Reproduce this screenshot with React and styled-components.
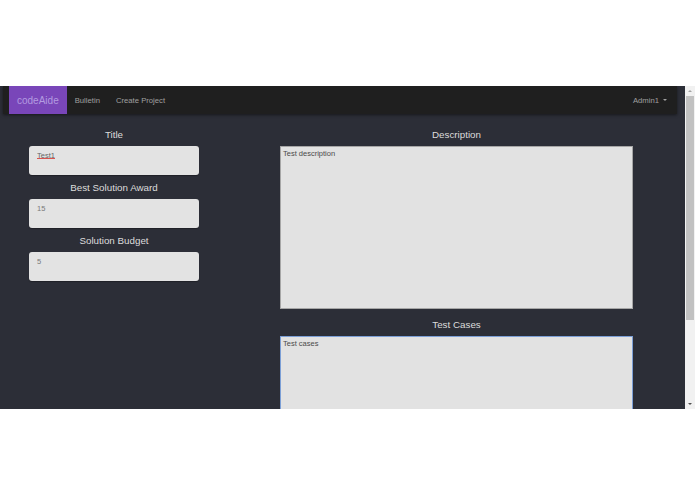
import React from "react";
import styled, { createGlobalStyle } from "styled-components";

const GlobalStyle = createGlobalStyle`
  html, body {
    margin: 0;
    padding: 0;
    background: #fff;
    font-family: "Liberation Sans", Arial, sans-serif;
  }
`;

const App = () => {
  return (
    <Page>
      <GlobalStyle />
      <Frame>
        <Main>
          <Navbar>
            <Brand>codeAide</Brand>
            <NavLink>Bulletin</NavLink>
            <NavLink>Create Project</NavLink>
            <UserMenu>
              Admin1
              <Caret />
            </UserMenu>
          </Navbar>
          <Form>
            <Column>
              <Label>Title</Label>
              <InputWrap>
                <Input defaultValue="Test1" spellCheck={false} />
                <SpellMark />
              </InputWrap>
              <Label>Best Solution Award</Label>
              <Input defaultValue="15" $muted />
              <Label>Solution Budget</Label>
              <Input defaultValue="5" $muted />
            </Column>
            <Column>
              <Label>Description</Label>
              <TextArea defaultValue="Test description" spellCheck={false} />
              <Label $top={9}>Test Cases</Label>
              <TextArea defaultValue="Test cases" spellCheck={false} $focused />
            </Column>
          </Form>
        </Main>
        <Scrollbar>
          <Arrow $up />
          <Track>
            <Thumb />
          </Track>
          <Arrow />
        </Scrollbar>
      </Frame>
    </Page>
  );
};

const Page = styled.div`
  height: 494px;
  padding-top: 86px;
  box-sizing: border-box;
  background: #fff;
`;

const Frame = styled.div`
  display: flex;
  height: 323px;
  overflow: hidden;
`;

const Main = styled.div`
  flex: 1;
  display: flex;
  flex-direction: column;
  background: #2c2e37;
  overflow: hidden;
`;

const Navbar = styled.nav`
  display: flex;
  align-items: stretch;
  height: 28px;
  flex-shrink: 0;
  margin: 0 8px 0 3px;
  padding-left: 6px;
  background: #1f1f1f;
  box-shadow: 0 1px 3px rgba(0, 0, 0, 0.5);
`;

const Brand = styled.div`
  display: flex;
  align-items: center;
  padding: 0 8px;
  background: #7946b9;
  color: #b39be0;
  font-size: 10px;
`;

const NavLink = styled.div`
  display: flex;
  align-items: center;
  padding: 0 8px;
  color: #a0a0a0;
  font-size: 7.7px;
`;

const UserMenu = styled(NavLink)`
  margin-left: auto;
  gap: 4px;
  padding-right: 10px;
`;

const Caret = styled.span`
  width: 0;
  height: 0;
  border-left: 2.5px solid transparent;
  border-right: 2.5px solid transparent;
  border-top: 2.5px solid #a0a0a0;
`;

const Form = styled.div`
  display: grid;
  grid-template-columns: 170px 353px;
  column-gap: 81px;
  padding: 8px 0 0 29px;
  align-items: start;
`;

const Column = styled.div`
  display: flex;
  flex-direction: column;
`;

const Label = styled.div`
  margin: ${(props) => props.$top ?? 6}px 0 4px;
  line-height: 14px;
  text-align: center;
  color: #dcdcdc;
  font-size: 9.8px;
`;

const InputWrap = styled.div`
  position: relative;
`;

const SpellMark = styled.span`
  position: absolute;
  left: 8px;
  top: 12px;
  width: 18px;
  height: 1px;
  background: #d9534f;
  pointer-events: none;
`;

const Input = styled.input`
  display: block;
  box-sizing: border-box;
  height: 29px;
  width: 100%;
  margin: 0;
  padding: 4px 8px 15px;
  border: none;
  border-radius: 3px;
  background: #e3e3e3;
  color: ${(props) => (props.$muted ? "#7a7a7a" : "#666")};
  font-family: "Liberation Sans", Arial, sans-serif;
  font-size: 7.5px;
  line-height: 10px;
  outline: none;
  box-shadow: 0 1px 1px rgba(0, 0, 0, 0.3);
`;

const TextArea = styled.textarea`
  box-sizing: border-box;
  display: block;
  width: 100%;
  height: 163px;
  margin: 0;
  padding: 2px;
  resize: none;
  border: 1px solid ${(props) => (props.$focused ? "#7c9fd6" : "#a6a6a6")};
  border-radius: 0;
  background: #e2e2e2;
  color: #4a4a4a;
  font-family: "Liberation Sans", Arial, sans-serif;
  font-size: 7.5px;
  line-height: 10px;
  outline: none;
`;

const Scrollbar = styled.div`
  width: 10px;
  flex-shrink: 0;
  display: flex;
  flex-direction: column;
  align-items: center;
  background: #f1f1f1;
`;

const Arrow = styled.span`
  width: 0;
  height: 0;
  margin: 4px 0;
  border-left: 2.5px solid transparent;
  border-right: 2.5px solid transparent;
  ${(props) =>
    props.$up
      ? "border-bottom: 2.5px solid #a3a3a3;"
      : "border-top: 2.5px solid #505050;"}
`;

const Track = styled.div`
  flex: 1;
  align-self: stretch;
  padding: 0 1px;
`;

const Thumb = styled.div`
  height: 224px;
  background: #c1c1c1;
`;

export default App;
